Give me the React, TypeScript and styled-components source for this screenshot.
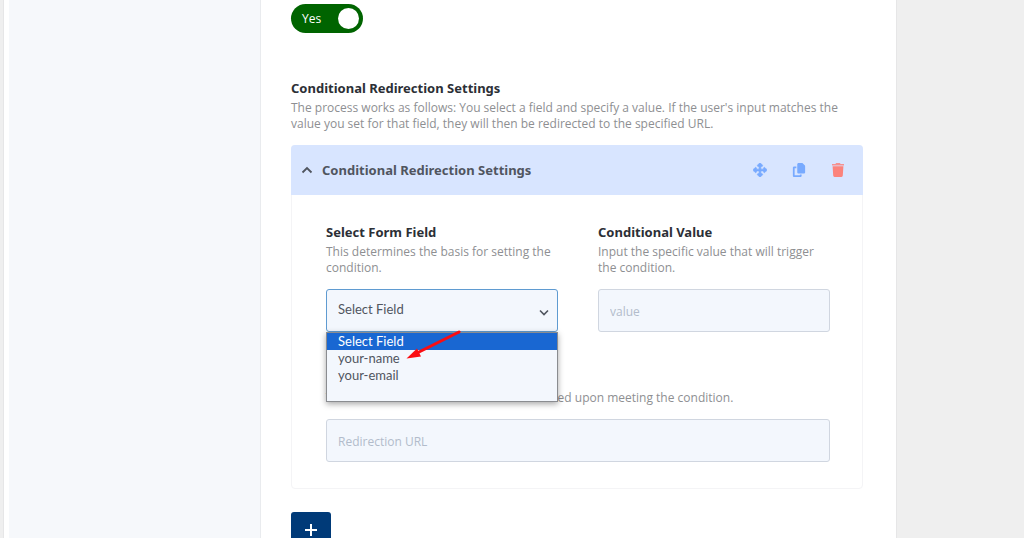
import React, { useState } from "react";
import styled, { createGlobalStyle } from "styled-components";
import { FaUpDownLeftRight, FaCopy } from "react-icons/fa6";

const GlobalStyle = createGlobalStyle`
  * { box-sizing: border-box; }
  body {
    margin: 0;
    background: #efefef;
    color: #2c2f36;
    font-family: "Open Sans", "Noto Sans", sans-serif;
    font-size: 12px;
    line-height: 16px;
  }
`;

const Shell = styled.div`
  display: flex;
  height: 100vh;
  overflow: hidden;
  margin: 0 127px 0 3px;
  padding-left: 5px;
  background: #fff;
  border: solid #e6e6e7;
  border-width: 0 1px;
`;

const Sidebar = styled.aside`
  flex: 0 0 252px;
  background: #f6f8fb;
  border-right: 1px solid #e9ebee;
`;

const Main = styled.main`
  flex: 1;
  min-width: 0;
  padding: 4px 33px 0 30px;
`;

const Toggle = styled.label`
  position: relative;
  display: flex;
  align-items: center;
  justify-content: space-between;
  width: 72px;
  height: 29px;
  padding: 0 4px 0 11px;
  border-radius: 15px;
  background: #006400;
  color: #fff;
  cursor: pointer;
`;

const ToggleInput = styled.input`
  position: absolute;
  inset: 0;
  margin: 0;
  opacity: 0;
`;

const Knob = styled.span`
  width: 21px;
  height: 21px;
  border-radius: 50%;
  background: #fff;
`;

const Section = styled.section`
  margin-top: 45px;
`;

const SectionTitle = styled.h2`
  margin: 0;
  font-family: "Noto Sans", sans-serif;
  font-size: 13px;
  font-weight: 700;
  line-height: 20px;
`;

const Hint = styled.p`
  margin: 2px 0 0;
  color: #8e8f92;
`;

const HintLabel = styled.label`
  display: block;
  color: #8e8f92;
`;

const Card = styled.div`
  margin-top: 13px;
  border: 1px solid #f4f4f6;
  border-radius: 4px;
`;

const CardHeader = styled.header`
  display: flex;
  align-items: center;
  height: 50px;
  margin: -1px -1px 0;
  padding: 0 18px 0 10px;
  border-radius: 4px 4px 0 0;
  background: #d8e5ff;
`;

const CollapseButton = styled.button`
  display: flex;
  align-items: center;
  gap: 9px;
  margin-right: auto;
  padding: 0;
  border: 0;
  background: none;
  color: #50555f;
  font-family: "Noto Sans", sans-serif;
  font-size: 13px;
  font-weight: 700;
  line-height: 20px;
`;

const IconButton = styled.button<{ $color: string }>`
  display: flex;
  margin-left: 25px;
  padding: 0;
  border: 0;
  background: none;
  color: ${(p) => p.$color};
  font-size: 14px;
`;

const MoveIcon = styled(FaUpDownLeftRight)`
  stroke: currentColor;
  stroke-width: 24px;
  stroke-linejoin: round;
`;

const CardBody = styled.div`
  padding: 27px 32px 26px 34px;
`;

const Columns = styled.div`
  display: grid;
  grid-template-columns: 1fr 1fr;
  gap: 40px;
`;

const Field = styled.div<{ $spaced?: boolean }>`
  position: relative;
  margin-top: ${(p) => (p.$spaced ? 58 : 0)}px;
`;

const Label = styled.label`
  display: block;
  font-family: "Noto Sans", sans-serif;
  font-size: 13px;
  font-weight: 700;
  line-height: 20px;
`;

const TextBox = styled.input`
  display: block;
  width: 100%;
  height: 43px;
  margin-top: 13px;
  padding: 1px 11px 0;
  border: 1px solid #d0d6e0;
  border-radius: 3px;
  background: #f3f7fd;
  color: #50555f;
  font: inherit;
  &::placeholder {
    color: #b2bccb;
    opacity: 1;
  }
`;

const SelectWrap = styled.div`
  position: relative;
  margin-top: 13px;
`;

const Select = styled.select`
  display: block;
  width: 100%;
  height: 43px;
  padding: 0 11px 3px;
  appearance: none;
  border: 1px solid #5f9bd1;
  border-radius: 3px;
  background: #f3f7fd;
  color: #50555f;
  font-family: Lato, sans-serif;
  font-size: 13px;
  outline: none;
`;

const SelectArrow = styled.svg`
  position: absolute;
  right: 8px;
  top: 20px;
  pointer-events: none;
`;

const Menu = styled.ul`
  position: absolute;
  z-index: 1;
  top: 43px;
  left: 0;
  right: 0;
  height: 70px;
  margin: 0;
  padding: 0;
  list-style: none;
  border: 1px solid #8a8c90;
  background: #f3f7fd;
  box-shadow: 0 2px 6px rgba(0, 0, 0, 0.35);
  font-family: Lato, sans-serif;
  font-size: 13px;
`;

const MenuItem = styled.li<{ $active: boolean }>`
  padding: 0 11px;
  line-height: 17px;
  background: ${(p) => (p.$active ? "#1967d2" : "transparent")};
  color: ${(p) => (p.$active ? "#fff" : "#50555f")};
`;

const Pointer = styled.svg`
  position: absolute;
  z-index: 2;
  top: 40px;
  left: 79px;
  pointer-events: none;
`;

const AddButton = styled.button`
  display: flex;
  align-items: center;
  justify-content: center;
  width: 40px;
  height: 36px;
  margin-top: 23px;
  border: 0;
  border-radius: 3px;
  background: #003a78;
  color: #fff;
`;

const options = ["Select Field", "your-name", "your-email"];

export default function App() {
  const [enabled, setEnabled] = useState(true);
  const [field, setField] = useState(options[0]);

  return (
    <>
      <GlobalStyle />
      <Shell>
        <Sidebar />
        <Main>
          <Toggle>
            <ToggleInput
              type="checkbox"
              checked={enabled}
              onChange={(e) => setEnabled(e.target.checked)}
            />
            Yes
            <Knob />
          </Toggle>

          <Section>
            <SectionTitle>Conditional Redirection Settings</SectionTitle>
            <Hint>
              The process works as follows: You select a field and specify a value. If the user's
              input matches the
              <br />
              value you set for that field, they will then be redirected to the specified URL.
            </Hint>

            <Card>
              <CardHeader>
                <CollapseButton type="button" aria-expanded="true">
                  <svg width="12" height="8" viewBox="0 0 12 8" fill="none" aria-hidden="true">
                    <path d="M1.5 6.5 6 2l4.5 4.5" stroke="#50555f" strokeWidth="1.8" />
                  </svg>
                  Conditional Redirection Settings
                </CollapseButton>
                <IconButton type="button" aria-label="Move" $color="#78aaff">
                  <MoveIcon />
                </IconButton>
                <IconButton type="button" aria-label="Duplicate" $color="#78aaff">
                  <FaCopy />
                </IconButton>
                <IconButton type="button" aria-label="Delete" $color="#fb837c">
                  <svg width="14" height="14" viewBox="0 0 14 14" fill="currentColor" aria-hidden="true">
                    <path d="M1 1h3.500L5 0h4l.5 1H13v1.500H1z" opacity=".85" />
                    <path d="M1.600 3.200h10.800l-.6 9.400a1.400 1.400 0 0 1-1.400 1.400H3.600a1.400 1.400 0 0 1-1.400-1.400z" />
                  </svg>
                </IconButton>
              </CardHeader>

              <CardBody>
                <Columns>
                  <Field>
                    <Label htmlFor="form-field">Select Form Field</Label>
                    <Hint>
                      This determines the basis for setting the
                      <br />
                      condition.
                    </Hint>
                    <SelectWrap>
                      <Select
                        id="form-field"
                        value={field}
                        onChange={(e) => setField(e.target.value)}
                      >
                        {options.map((o) => (
                          <option key={o}>{o}</option>
                        ))}
                      </Select>
                      <SelectArrow width="12" height="8" viewBox="0 0 12 8" fill="none">
                        <path d="M2 1.5 6 5.5l4-4" stroke="#50555f" strokeWidth="1.6" />
                      </SelectArrow>
                      <Menu role="listbox" aria-label="Form fields">
                        {options.map((o) => (
                          <MenuItem
                            key={o}
                            role="option"
                            aria-selected={o === field}
                            $active={o === field}
                            onClick={() => setField(o)}
                          >
                            {o}
                          </MenuItem>
                        ))}
                      </Menu>
                      <Pointer width="58" height="34" viewBox="0 0 58 34" aria-hidden="true">
                        <path d="M54 3 14 23" stroke="#fb0d12" strokeWidth="3" strokeLinecap="round" />
                        <path d="M1.500 29.500 12 19.500 16 27.500Z" fill="#fb0d12" />
                      </Pointer>
                    </SelectWrap>
                  </Field>
                  <Field>
                    <Label htmlFor="condition-value">Conditional Value</Label>
                    <Hint>
                      Input the specific value that will trigger
                      <br />
                      the condition.
                    </Hint>
                    <TextBox id="condition-value" placeholder="value" />
                  </Field>
                </Columns>
                <Field $spaced>
                  <HintLabel htmlFor="redirect-url">
                    The URL to which the user will be redirected upon meeting the condition.
                  </HintLabel>
                  <TextBox id="redirect-url" placeholder="Redirection URL" />
                </Field>
              </CardBody>
            </Card>

            <AddButton type="button" aria-label="Add condition">
              <svg width="12" height="12" viewBox="0 0 12 12" aria-hidden="true">
                <path d="M6 0v12M0 6h12" stroke="#fff" strokeWidth="2" />
              </svg>
            </AddButton>
          </Section>
        </Main>
      </Shell>
    </>
  );
}
